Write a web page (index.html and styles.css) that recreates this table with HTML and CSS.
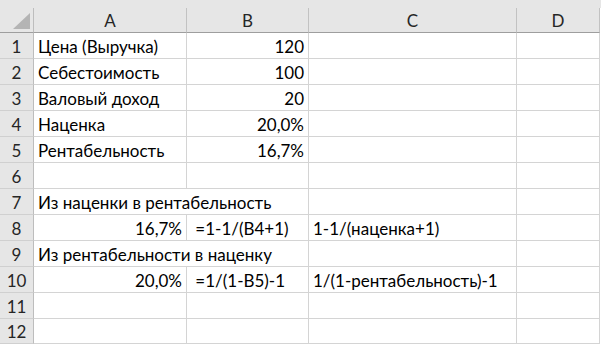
FILE: index.html
```html
<!DOCTYPE html>
<html lang="ru">
<head>
<meta charset="utf-8">
<title>Наценка и рентабельность</title>
<link rel="stylesheet" href="styles.css">
</head>
<body>
<div class="sheet">
  <div class="top-strip"></div>
  <div class="grid">
    <div class="corner">
      <svg class="select-all" width="17" height="16" viewBox="0 0 17 16"><polygon points="0,16 17,16 17,0" fill="#b4b4b4"/></svg>
    </div>
    <div class="col-head">A</div>
    <div class="col-head">B</div>
    <div class="col-head">C</div>
    <div class="col-head">D</div>

    <div class="row-head">1</div>
    <div class="cell">Цена (Выручка)</div>
    <div class="cell num">120</div>
    <div class="cell"></div>
    <div class="cell"></div>

    <div class="row-head">2</div>
    <div class="cell">Себестоимость</div>
    <div class="cell num">100</div>
    <div class="cell"></div>
    <div class="cell"></div>

    <div class="row-head">3</div>
    <div class="cell">Валовый доход</div>
    <div class="cell num">20</div>
    <div class="cell"></div>
    <div class="cell"></div>

    <div class="row-head">4</div>
    <div class="cell">Наценка</div>
    <div class="cell num">20,0%</div>
    <div class="cell"></div>
    <div class="cell"></div>

    <div class="row-head">5</div>
    <div class="cell">Рентабельность</div>
    <div class="cell num">16,7%</div>
    <div class="cell"></div>
    <div class="cell"></div>

    <div class="row-head">6</div>
    <div class="cell"></div>
    <div class="cell"></div>
    <div class="cell"></div>
    <div class="cell"></div>

    <div class="row-head">7</div>
    <div class="cell span-2">Из наценки в рентабельность</div>
    <div class="cell"></div>
    <div class="cell"></div>

    <div class="row-head">8</div>
    <div class="cell num">16,7%</div>
    <div class="cell"> =1-1/(B4+1)</div>
    <div class="cell">1-1/(наценка+1)</div>
    <div class="cell"></div>

    <div class="row-head">9</div>
    <div class="cell span-2">Из рентабельности в наценку</div>
    <div class="cell"></div>
    <div class="cell"></div>

    <div class="row-head">10</div>
    <div class="cell num">20,0%</div>
    <div class="cell"> =1/(1-B5)-1</div>
    <div class="cell">1/(1-рентабельность)-1</div>
    <div class="cell"></div>

    <div class="row-head">11</div>
    <div class="cell"></div>
    <div class="cell"></div>
    <div class="cell"></div>
    <div class="cell"></div>

    <div class="row-head">12</div>
    <div class="cell"></div>
    <div class="cell"></div>
    <div class="cell"></div>
    <div class="cell"></div>
  </div>
</div>
</body>
</html>
```
FILE: styles.css
```css
html, body {
  margin: 0;
  padding: 0;
  background: #ffffff;
}

.sheet {
  width: 601px;
  height: 345px;
  overflow: hidden;
  font-family: Lato, "Open Sans", "Noto Sans", sans-serif;
  font-size: 17px;
  color: #000000;
}

.top-strip {
  height: 8px;
  background: #e6e6e6;
}

.grid {
  display: grid;
  grid-template-columns: 34px 153px 122px 208px 83px;
  grid-template-rows: 25px repeat(11, 26px) 25px;
}

/* every box keeps its text on one bottom-aligned line, spaces kept */
.grid > div {
  box-sizing: border-box;
  display: flex;
  align-items: flex-end;
  line-height: 21px;
  white-space: pre;
}

.corner {
  background: #e6e6e6;
  border-right: 1px solid #bdbdbd;
  border-bottom: 1px solid #9e9e9e;
  justify-content: flex-end;
  padding: 0 3px 3px 0;
}

.select-all {
  display: block;
}

.col-head {
  background: #e6e6e6;
  border-right: 1px solid #c2c2c2;
  border-bottom: 1px solid #9e9e9e;
  justify-content: center;
  color: #262626;
  padding-bottom: 1px;
}

.row-head {
  background: #e6e6e6;
  border-right: 1px solid #bdbdbd;
  border-bottom: 1px solid #d0d0d0;
  justify-content: center;
  color: #262626;
  padding-bottom: 1px;
}

.cell {
  border-right: 1px solid #d4d4d4;
  border-bottom: 1px solid #d4d4d4;
  padding: 0 4px 1px 4px;
}

.cell.num {
  justify-content: flex-end;
}

.cell.span-2 {
  grid-column: span 2;
}
```
